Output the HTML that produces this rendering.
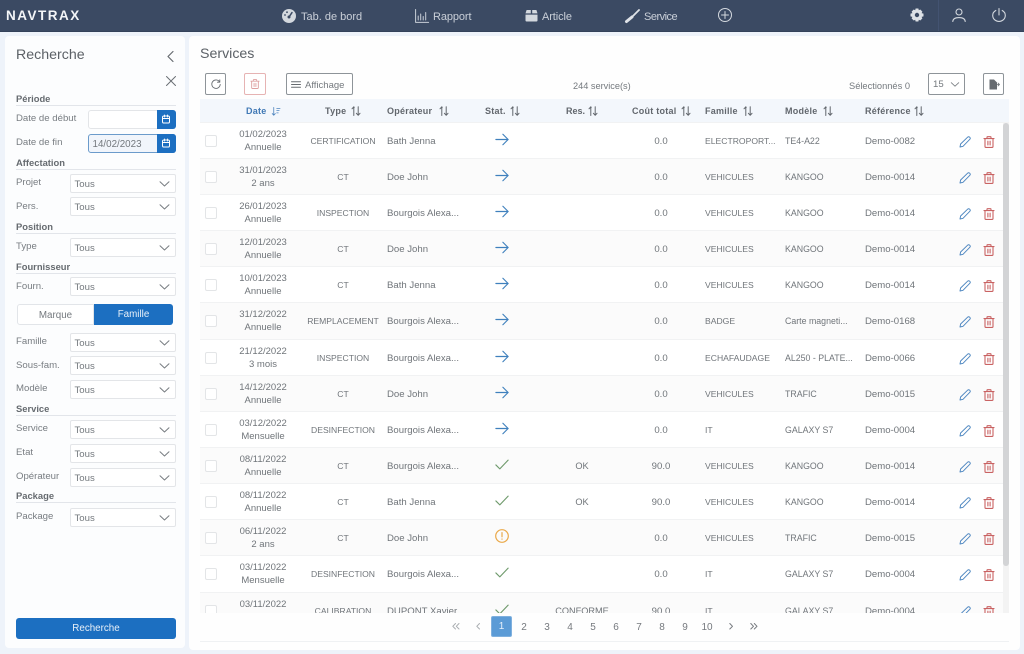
<!DOCTYPE html>
<html lang="fr"><head><meta charset="utf-8"><title>Navtrax - Services</title>
<style>
*{box-sizing:border-box}
html,body{margin:0;padding:0;width:1024px;height:654px;overflow:hidden;background:#eef3fa}
body{font-family:"Liberation Sans",sans-serif;font-size:9.6px;color:#70757a;position:relative}
#w{position:absolute;left:0;top:0;width:1024px;height:654px;filter:blur(.3px)}
.a,.a>*{position:absolute}
svg{position:absolute;overflow:visible;fill:none;stroke-linecap:round;stroke-linejoin:round}
.top{left:0;top:0;width:1024px;height:32px;background:#3b4a63;border-bottom:1px solid #34425a}
.logo{left:6px;top:8px;color:#f4f6f8;font-size:13.5px;font-weight:bold;letter-spacing:1.5px;line-height:16px}
.nv{top:11px;font-size:11px;line-height:13px;color:#c9cfd8;white-space:nowrap}
.ps{left:5px;top:36px;width:180px;height:612px;background:#fcfdfe;border-radius:4px}
.pm{left:189px;top:36px;width:831px;height:614px;background:#fefefe;border-radius:4px}
.h{font-size:14.2px;color:#5c6167;line-height:18px;white-space:nowrap}
.sec{left:16px;width:160px;height:13px;font-weight:bold;font-size:9.4px;color:#666b70;line-height:12px;border-bottom:1px solid #e2e5ea}
.lb{left:16px;font-size:9.6px;line-height:12px;color:#787d82;white-space:nowrap}
.sel{left:70px;width:106px;height:19px;background:#fff;border:1px solid #e3e5e8;border-radius:2px;font-size:9.6px;line-height:19px;padding-left:3.5px;color:#73787d}
.sel svg{right:5px;top:6px}
.inp{left:88px;width:88px;height:19px;background:#fff;border:1px solid #e3e5e8;border-radius:3px;font-size:9.8px;line-height:19px;padding-left:3.5px;color:#73787d}
.cal{left:157px;width:19px;height:19px;background:#1c6fc1;border-radius:0 3px 3px 0}
.btn{background:#fff;border:1px solid #8e9499;border-radius:2px;height:22px;top:73px}
.th{left:200px;top:99px;width:809px;height:23px;background:#f3f7fc}
.tl{top:106px;font-weight:bold;font-size:9px;letter-spacing:.25px;color:#62676d;line-height:11px;white-space:nowrap}
.tb{left:200px;top:122px;width:809px;height:491px;overflow:hidden}
.r{position:absolute;left:0;width:803px;height:37px;border-top:1px solid #f1f2f3;background:#fff}
.r.e{background:#fbfbfb}
.r span{position:absolute;white-space:nowrap;line-height:12px;top:12.5px}
.r .ck{left:5px;top:12px;width:12px;height:12px;border:1px solid #e3e5e7;border-radius:2px;background:#fff}
.r .d{left:33px;width:60px;text-align:center;top:6px;line-height:12.5px;font-size:9.5px}
.r .t{left:103px;width:80px;text-align:center;font-size:8.6px;top:11.5px}
.r .o{left:187px}
.r .x{left:352px;width:60px;text-align:center;font-size:9.2px;top:11.5px}
.r .c{left:431px;width:60px;text-align:center}
.r .f{left:505px;font-size:8.6px;top:11.5px}
.r .m{left:585px;font-size:8.8px;top:11.5px}
.r .g{left:665px}
.pg{top:622px;width:20px;text-align:center;font-size:10px;line-height:12px;color:#75797e}
</style></head><body>
<svg width="0" height="0" style="position:absolute">
<defs>
<symbol id="ch" viewBox="0 0 11 6"><path d="M1 .8 5.5 5 10 .8" stroke="#777c81" stroke-width="1" fill="none"/></symbol>
<symbol id="so" viewBox="0 0 10 10"><path d="M2.8 9.5V1M1 2.8 2.8 .8 3.2 1.3M7.2 .8V9.2M5.4 7.3 7.2 9.3 9 7.3" stroke="#62676d" stroke-width="1" fill="none"/></symbol>
<symbol id="cl" viewBox="0 0 10 10"><rect x="1.5" y="2" width="7" height="7" rx="1.3" stroke="#fff" fill="none"/><path d="M1.5 4.5h7M3.5 1v2M6.5 1v2" stroke="#fff" stroke-width=".9"/></symbol>
<symbol id="ar" viewBox="0 0 16 14"><path d="M1 7H15M9 1l6 6-6 6" stroke="#3f80bd" stroke-width="1.3" fill="none" stroke-linecap="round" stroke-linejoin="round"/></symbol>
<symbol id="ok" viewBox="0 0 16 12"><path d="M1 6.5 5.5 11 15 1" stroke="#6f9a6c" stroke-width="1.3" fill="none" stroke-linecap="round" stroke-linejoin="round"/></symbol>
<symbol id="pn" viewBox="0 0 12 12"><path d="M1 11 1.6 8 8.6 1.2C9.2.6 10 .6 10.7 1.2 11.4 1.9 11.4 2.7 10.8 3.3L4 10.3Z" stroke="#4d86c0" stroke-width=".95" fill="none" stroke-linejoin="round"/></symbol>
<symbol id="tr" viewBox="0 0 12 12"><path d="M1 2.6H11M4 2.5V1.2C4 .9 4.2.7 4.5.7H7.5C7.8.7 8 .9 8 1.2V2.5M2 2.8V10.5C2 11 2.4 11.4 2.9 11.4H9.1C9.6 11.4 10 11 10 10.5V2.8M4.9 5.2V9M7.1 5.2V9" stroke="#c96262" stroke-width="1.1" fill="none"/></symbol>
</defs></svg>
<div id="w" class="a">
<header class="top"></header>
<div class="logo">NAVTRAX</div>
<svg style="left:282px;top:9px" width="14" height="14" viewBox="0 0 14 14"><circle cx="7" cy="7" r="7" fill="#d3d8de"/><path d="M7 8 10 3.6" stroke="#3b4a63" stroke-width="1.5"/><circle cx="3" cy="6" r=".9" fill="#3b4a63"/><circle cx="5" cy="3.2" r=".9" fill="#3b4a63"/><circle cx="7" cy="8" r="1.5" fill="#3b4a63"/></svg>
<div class="nv" style="left:301px">Tab. de bord</div>
<svg style="left:415px;top:9px" width="14" height="14" viewBox="0 0 14 14" stroke="#c9cfd8"><path d="M.6 .5V13.4H13.6M3.2 11V7M5.7 11V5M8.2 11V7.5M10.7 11V3.5"/></svg>
<div class="nv" style="left:433px;letter-spacing:-.1px">Rapport</div>
<svg style="left:525px;top:9px" width="13" height="13" viewBox="0 0 13 13"><path d="M.5 5.6H12.5V11.5C12.5 12 12 12.5 11.5 12.5H1.5C1 12.5.5 12 .5 11.5ZM.5 4.4 1.6 1H5.8V4.4ZM7.2 1H11.4L12.5 4.4H7.2Z" fill="#d3d8de"/></svg>
<div class="nv" style="left:542px;letter-spacing:-.1px">Article</div>
<svg style="left:625px;top:9px" width="15" height="14" viewBox="0 0 15 14"><path d="M1.5 12.5 7 8" stroke="#dfe3e8" stroke-width="3"/><path d="M7.5 7.5 14 1" stroke="#dfe3e8" stroke-width="1.8"/></svg>
<div class="nv" style="left:644px;letter-spacing:-.5px">Service</div>
<svg style="left:718px;top:8px" width="14" height="14" viewBox="0 0 14 14" stroke="#d3d8de"><circle cx="7" cy="7" r="6.5"/><path d="M7 3.5v7M3.5 7h7"/></svg>
<svg style="left:910px;top:8px" width="14" height="14" viewBox="0 0 14 14"><path d="M5.6.5H8.4L8.8 2.3 10.3 1.5 12.4 3.6 11.6 5.1 13.5 5.6V8.4L11.6 8.9 12.4 10.4 10.3 12.5 8.8 11.7 8.4 13.5H5.6L5.2 11.7 3.7 12.5 1.6 10.4 2.4 8.9.5 8.4V5.6L2.4 5.1 1.6 3.6 3.7 1.5 5.2 2.3Z" fill="#dde1e6"/><circle cx="7" cy="7" r="2.2" fill="#3b4a63"/></svg>
<div class="a" style="left:938px;top:0;width:1px;height:31px;background:#435371"></div>
<svg style="left:952px;top:8px" width="14" height="14" viewBox="0 0 14 14" stroke="#d3d8de" stroke-width="1.1"><circle cx="7" cy="4" r="3"/><path d="M.8 13.5C1 10.6 3.4 9.6 7 9.6S13 10.6 13.2 13.5"/></svg>
<svg style="left:992px;top:8px" width="14" height="14" viewBox="0 0 14 14" stroke="#d3d8de" stroke-width="1.1"><path d="M7 .6V7M3.8 2.5C1.8 3.6.7 5.4.7 7.4.7 10.9 3.5 13.4 7 13.4S13.3 10.9 13.3 7.4C13.3 5.4 12.2 3.6 10.2 2.5"/></svg>

<aside class="ps"></aside>
<div class="h" style="left:16px;top:46px">Recherche</div>
<svg style="left:167px;top:51px" width="7" height="11" stroke="#666b70" stroke-width="1.2"><path d="M6 .5 1 5.5 6 10.5"/></svg>
<svg style="left:166px;top:76px" width="10" height="10" stroke="#6a6f74"><path d="M.5 .5 9.5 9.5M9.5 .5 .5 9.5"/></svg>

<div class="sec" style="top:93px">Période</div>
<div class="lb" style="top:113px">Date de début</div>
<div class="inp" style="top:110px"></div><div class="cal" style="top:110px"></div>
<svg style="left:161px;top:114px" width="10" height="10"><use href="#cl"/></svg>
<div class="lb" style="top:137px">Date de fin</div>
<div class="inp" style="top:134px;background:#f1f5fb;border-color:#6b9bcb">14/02/2023</div><div class="cal" style="top:134px"></div>
<svg style="left:161px;top:138px" width="10" height="10"><use href="#cl"/></svg>

<div class="sec" style="top:157px">Affectation</div>
<div class="lb" style="top:177px">Projet</div><div class="sel a" style="top:174px">Tous<svg width="11" height="6"><use href="#ch"/></svg></div>
<div class="lb" style="top:201px">Pers.</div><div class="sel a" style="top:197px">Tous<svg width="11" height="6"><use href="#ch"/></svg></div>
<div class="sec" style="top:221px">Position</div>
<div class="lb" style="top:241px">Type</div><div class="sel a" style="top:238px">Tous<svg width="11" height="6"><use href="#ch"/></svg></div>
<div class="sec" style="top:261px">Fournisseur</div>
<div class="lb" style="top:281px">Fourn.</div><div class="sel a" style="top:277px">Tous<svg width="11" height="6"><use href="#ch"/></svg></div>

<div style="left:17px;top:304px;width:77px;height:21px;background:#fff;border:1px solid #e2e5e9;border-radius:3px 0 0 3px;text-align:center;line-height:21px;font-size:9.8px;color:#74797e">Marque</div>
<div style="left:94px;top:304px;width:79px;height:21px;background:#1c6fc1;border-radius:0 3px 3px 0;text-align:center;line-height:22px;font-size:9.8px;color:#e8f0f8">Famille</div>

<div class="lb" style="top:336px">Famille</div><div class="sel a" style="top:333px">Tous<svg width="11" height="6"><use href="#ch"/></svg></div>
<div class="lb" style="top:360px">Sous-fam.</div><div class="sel a" style="top:356px">Tous<svg width="11" height="6"><use href="#ch"/></svg></div>
<div class="lb" style="top:383px">Modèle</div><div class="sel a" style="top:380px">Tous<svg width="11" height="6"><use href="#ch"/></svg></div>
<div class="sec" style="top:403px">Service</div>
<div class="lb" style="top:423px">Service</div><div class="sel a" style="top:420px">Tous<svg width="11" height="6"><use href="#ch"/></svg></div>
<div class="lb" style="top:447px">Etat</div><div class="sel a" style="top:444px">Tous<svg width="11" height="6"><use href="#ch"/></svg></div>
<div class="lb" style="top:471px">Opérateur</div><div class="sel a" style="top:468px">Tous<svg width="11" height="6"><use href="#ch"/></svg></div>
<div class="sec" style="top:490px">Package</div>
<div class="lb" style="top:511px">Package</div><div class="sel a" style="top:508px">Tous<svg width="11" height="6"><use href="#ch"/></svg></div>
<div style="left:16px;top:618px;width:160px;height:21px;background:#1c6fc1;border-radius:3px;text-align:center;line-height:22px;font-size:9.8px;color:#e8f0f8">Recherche</div>

<main class="pm"></main>
<div class="h" style="left:200px;top:45px">Services</div>
<div class="btn" style="left:205px;width:21px"></div>
<svg style="left:211px;top:79px" width="10" height="10" stroke="#666b70" stroke-width=".9"><path d="M8.6 3A4.2 4.2 0 1 0 9.2 5.4M8.8 .8V3.2H6.4"/></svg>
<div class="btn" style="left:244px;width:22px;border-color:#e6b3b3"></div>
<svg style="left:250px;top:79px" width="10" height="10"><use href="#tr" opacity=".6"/></svg>
<div class="btn" style="left:286px;width:67px"></div>
<svg style="left:291px;top:81px" width="10" height="7" stroke="#666b70"><path d="M.5 .8H9.5M.5 3.5H9.5M.5 6.2H9.5"/></svg>
<div style="left:305px;top:80px;line-height:12px;font-size:9.5px;color:#74797e">Affichage</div>
<div style="left:573px;top:80px;line-height:12px;font-size:9.2px;color:#74797e">244 service(s)</div>
<div style="left:849px;top:80px;line-height:12px;font-size:9.3px;color:#74797e">Sélectionnés 0</div>
<div class="btn" style="left:928px;width:37px;padding-left:4px;line-height:22px;font-size:9.6px;color:#74797e">15<svg style="left:21px;top:8px" width="10" height="5"><use href="#ch"/></svg></div>
<div class="btn" style="left:983px;width:21px"></div>
<svg style="left:989px;top:79px" width="11" height="11"><path d="M.5 .5H5L8 3.5V10.5H.5Z" fill="#666b70"/><path d="M6.5 5.5H10.5L9 4M10.5 5.5 9 7" stroke="#666b70" stroke-width=".8"/></svg>

<div class="th"></div>
<div class="tl" style="left:246px;color:#3f78b5">Date</div>
<svg style="left:271px;top:107px" width="10" height="9" viewBox="0 0 10 10"><path d="M2.5 .5V9M.8 7.3 2.5 9.2 4.2 7.3M5.8 1.5H9.5M5.8 4H8.5M5.8 6.5H7.5" stroke="#4f86bf" stroke-width=".9"/></svg>
<div class="tl" style="left:325px">Type</div><svg style="left:351px;top:106px" width="10" height="10"><use href="#so"/></svg>
<div class="tl" style="left:387px">Opérateur</div><svg style="left:439px;top:106px" width="10" height="10"><use href="#so"/></svg>
<div class="tl" style="left:485px">Stat.</div><svg style="left:510px;top:106px" width="10" height="10"><use href="#so"/></svg>
<div class="tl" style="left:566px;letter-spacing:0">Res.</div><svg style="left:588px;top:106px" width="10" height="10"><use href="#so"/></svg>
<div class="tl" style="left:632px">Coût total</div><svg style="left:681px;top:106px" width="10" height="10"><use href="#so"/></svg>
<div class="tl" style="left:705px">Famille</div><svg style="left:743px;top:106px" width="10" height="10"><use href="#so"/></svg>
<div class="tl" style="left:785px">Modèle</div><svg style="left:823px;top:106px" width="10" height="10"><use href="#so"/></svg>
<div class="tl" style="left:865px">Référence</div><svg style="left:914px;top:106px" width="10" height="10"><use href="#so"/></svg>

<div class="tb">
<div class="r" style="top:0"><span class="ck"></span><span class="d">01/02/2023<br>Annuelle</span><span class="t">CERTIFICATION</span><span class="o">Bath Jenna</span><svg style="left:295px;top:10px" width="14" height="13"><use href="#ar"/></svg><span class="c">0.0</span><span class="f">ELECTROPORT...</span><span class="m">TE4-A22</span><span class="g">Demo-0082</span><svg style="left:759px;top:13px" width="12" height="12"><use href="#pn"/></svg><svg style="left:783px;top:13px" width="12" height="12"><use href="#tr"/></svg></div>
<div class="r e" style="top:36px"><span class="ck"></span><span class="d">31/01/2023<br>2 ans</span><span class="t">CT</span><span class="o">Doe John</span><svg style="left:295px;top:10px" width="14" height="13"><use href="#ar"/></svg><span class="c">0.0</span><span class="f">VEHICULES</span><span class="m">KANGOO</span><span class="g">Demo-0014</span><svg style="left:759px;top:13px" width="12" height="12"><use href="#pn"/></svg><svg style="left:783px;top:13px" width="12" height="12"><use href="#tr"/></svg></div>
<div class="r" style="top:72px"><span class="ck"></span><span class="d">26/01/2023<br>Annuelle</span><span class="t">INSPECTION</span><span class="o">Bourgois Alexa...</span><svg style="left:295px;top:10px" width="14" height="13"><use href="#ar"/></svg><span class="c">0.0</span><span class="f">VEHICULES</span><span class="m">KANGOO</span><span class="g">Demo-0014</span><svg style="left:759px;top:13px" width="12" height="12"><use href="#pn"/></svg><svg style="left:783px;top:13px" width="12" height="12"><use href="#tr"/></svg></div>
<div class="r e" style="top:108px"><span class="ck"></span><span class="d">12/01/2023<br>Annuelle</span><span class="t">CT</span><span class="o">Doe John</span><svg style="left:295px;top:10px" width="14" height="13"><use href="#ar"/></svg><span class="c">0.0</span><span class="f">VEHICULES</span><span class="m">KANGOO</span><span class="g">Demo-0014</span><svg style="left:759px;top:13px" width="12" height="12"><use href="#pn"/></svg><svg style="left:783px;top:13px" width="12" height="12"><use href="#tr"/></svg></div>
<div class="r" style="top:144px"><span class="ck"></span><span class="d">10/01/2023<br>Annuelle</span><span class="t">CT</span><span class="o">Bath Jenna</span><svg style="left:295px;top:10px" width="14" height="13"><use href="#ar"/></svg><span class="c">0.0</span><span class="f">VEHICULES</span><span class="m">KANGOO</span><span class="g">Demo-0014</span><svg style="left:759px;top:13px" width="12" height="12"><use href="#pn"/></svg><svg style="left:783px;top:13px" width="12" height="12"><use href="#tr"/></svg></div>
<div class="r e" style="top:180px"><span class="ck"></span><span class="d">31/12/2022<br>Annuelle</span><span class="t">REMPLACEMENT</span><span class="o">Bourgois Alexa...</span><svg style="left:295px;top:10px" width="14" height="13"><use href="#ar"/></svg><span class="c">0.0</span><span class="f">BADGE</span><span class="m">Carte magneti...</span><span class="g">Demo-0168</span><svg style="left:759px;top:13px" width="12" height="12"><use href="#pn"/></svg><svg style="left:783px;top:13px" width="12" height="12"><use href="#tr"/></svg></div>
<div class="r" style="top:217px"><span class="ck"></span><span class="d">21/12/2022<br>3 mois</span><span class="t">INSPECTION</span><span class="o">Bourgois Alexa...</span><svg style="left:295px;top:10px" width="14" height="13"><use href="#ar"/></svg><span class="c">0.0</span><span class="f">ECHAFAUDAGE</span><span class="m">AL250 - PLATE...</span><span class="g">Demo-0066</span><svg style="left:759px;top:13px" width="12" height="12"><use href="#pn"/></svg><svg style="left:783px;top:13px" width="12" height="12"><use href="#tr"/></svg></div>
<div class="r e" style="top:253px"><span class="ck"></span><span class="d">14/12/2022<br>Annuelle</span><span class="t">CT</span><span class="o">Doe John</span><svg style="left:295px;top:10px" width="14" height="13"><use href="#ar"/></svg><span class="c">0.0</span><span class="f">VEHICULES</span><span class="m">TRAFIC</span><span class="g">Demo-0015</span><svg style="left:759px;top:13px" width="12" height="12"><use href="#pn"/></svg><svg style="left:783px;top:13px" width="12" height="12"><use href="#tr"/></svg></div>
<div class="r" style="top:289px"><span class="ck"></span><span class="d">03/12/2022<br>Mensuelle</span><span class="t">DESINFECTION</span><span class="o">Bourgois Alexa...</span><svg style="left:295px;top:10px" width="14" height="13"><use href="#ar"/></svg><span class="c">0.0</span><span class="f">IT</span><span class="m">GALAXY S7</span><span class="g">Demo-0004</span><svg style="left:759px;top:13px" width="12" height="12"><use href="#pn"/></svg><svg style="left:783px;top:13px" width="12" height="12"><use href="#tr"/></svg></div>
<div class="r e" style="top:325px"><span class="ck"></span><span class="d">08/11/2022<br>Annuelle</span><span class="t">CT</span><span class="o">Bourgois Alexa...</span><svg style="left:295px;top:11px" width="14" height="11"><use href="#ok"/></svg><span class="x">OK</span><span class="c">90.0</span><span class="f">VEHICULES</span><span class="m">KANGOO</span><span class="g">Demo-0014</span><svg style="left:759px;top:13px" width="12" height="12"><use href="#pn"/></svg><svg style="left:783px;top:13px" width="12" height="12"><use href="#tr"/></svg></div>
<div class="r" style="top:361px"><span class="ck"></span><span class="d">08/11/2022<br>Annuelle</span><span class="t">CT</span><span class="o">Bath Jenna</span><svg style="left:295px;top:11px" width="14" height="11"><use href="#ok"/></svg><span class="x">OK</span><span class="c">90.0</span><span class="f">VEHICULES</span><span class="m">KANGOO</span><span class="g">Demo-0014</span><svg style="left:759px;top:13px" width="12" height="12"><use href="#pn"/></svg><svg style="left:783px;top:13px" width="12" height="12"><use href="#tr"/></svg></div>
<div class="r e" style="top:397px"><span class="ck"></span><span class="d">06/11/2022<br>2 ans</span><span class="t">CT</span><span class="o">Doe John</span><svg style="left:295px;top:9px" width="14" height="14" viewBox="0 0 14 14" stroke="#eaa94a" stroke-width="1.2"><circle cx="7" cy="7" r="6.3"/><path d="M7 3.6V7.8M7 10V10.2"/></svg><span class="c">0.0</span><span class="f">VEHICULES</span><span class="m">TRAFIC</span><span class="g">Demo-0015</span><svg style="left:759px;top:13px" width="12" height="12"><use href="#pn"/></svg><svg style="left:783px;top:13px" width="12" height="12"><use href="#tr"/></svg></div>
<div class="r" style="top:433px"><span class="ck"></span><span class="d">03/11/2022<br>Mensuelle</span><span class="t">DESINFECTION</span><span class="o">Bourgois Alexa...</span><svg style="left:295px;top:11px" width="14" height="11"><use href="#ok"/></svg><span class="c">0.0</span><span class="f">IT</span><span class="m">GALAXY S7</span><span class="g">Demo-0004</span><svg style="left:759px;top:13px" width="12" height="12"><use href="#pn"/></svg><svg style="left:783px;top:13px" width="12" height="12"><use href="#tr"/></svg></div>
<div class="r e" style="top:470px"><span class="ck"></span><span class="d">03/11/2022<br>Annuelle</span><span class="t">CALIBRATION</span><span class="o">DUPONT Xavier</span><svg style="left:295px;top:11px" width="14" height="11"><use href="#ok"/></svg><span class="x">CONFORME</span><span class="c">90.0</span><span class="f">IT</span><span class="m">GALAXY S7</span><span class="g">Demo-0004</span><svg style="left:759px;top:13px" width="12" height="12"><use href="#pn"/></svg><svg style="left:783px;top:13px" width="12" height="12"><use href="#tr"/></svg></div>
</div>
<div style="left:1003px;top:122px;width:6px;height:491px;background:#f3f3f3"></div>
<div style="left:1003px;top:123px;width:6px;height:443px;background:#d3d4d6;border-radius:3px"></div>

<svg style="left:452px;top:623px" width="8" height="7" stroke="#a9adb1"><path d="M3.5 .5.8 3.3 3.5 6M7 .5 4.3 3.3 7 6"/></svg>
<svg style="left:476px;top:623px" width="4" height="7" stroke="#a9adb1"><path d="M3.5 .5.8 3.3 3.5 6"/></svg>
<div style="left:491px;top:616px;width:21px;height:21px;background:#5b9bd6;border:1px solid #7fb0de;border-radius:2px;color:#e6f0fa;text-align:center;line-height:20px;font-size:10px">1</div>
<div class="pg" style="left:514px">2</div>
<div class="pg" style="left:537px">3</div>
<div class="pg" style="left:560px">4</div>
<div class="pg" style="left:583px">5</div>
<div class="pg" style="left:606px">6</div>
<div class="pg" style="left:629px">7</div>
<div class="pg" style="left:652px">8</div>
<div class="pg" style="left:675px">9</div>
<div class="pg" style="left:697px">10</div>
<svg style="left:729px;top:623px" width="4" height="7" stroke="#75797e"><path d="M.8 .5 3.5 3.3.8 6"/></svg>
<svg style="left:750px;top:623px" width="8" height="7" stroke="#75797e"><path d="M.8 .5 3.5 3.3.8 6M4.3 .5 7 3.3 4.3 6"/></svg>
<div style="left:200px;top:641px;width:809px;height:1px;background:#eff1f3"></div>
</div>
</body></html>
